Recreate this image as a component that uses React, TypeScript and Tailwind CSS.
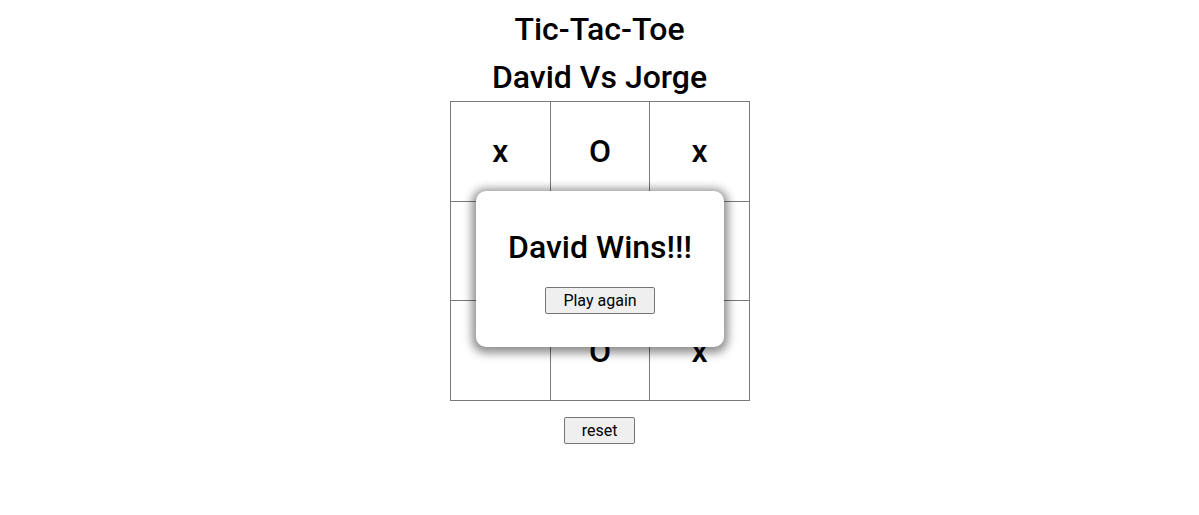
import React from "react";

// middle row is hidden behind the winner popup
const board = ["x", "O", "x", "", "", "", "", "O", "x"];

const App = () => {
  return (
    <div className="bg-white h-[515px] w-full font-['Roboto',sans-serif] text-black">
      <div className="flex flex-col items-center">
        <h1 className="mt-[5px] text-[32px] leading-[48px] font-medium">Tic-Tac-Toe</h1>
        <h2 className="text-[32px] leading-[48px] font-medium">David Vs Jorge</h2>

        <div className="relative ml-px">
          <div className="grid grid-cols-3 grid-rows-3 w-[300px] h-[300px] border-l border-t border-[#7a7a7a]">
            {board.map((c, i) => (
              <div
                key={i}
                className="flex items-center justify-center border-r border-b border-[#7a7a7a] text-[32px] font-medium"
              >
                {c}
              </div>
            ))}
          </div>

          <div className="absolute left-[26px] top-[90px] w-[248px] h-[156px] bg-white rounded-[10px] shadow-[0_2px_10px_4px_rgba(0,0,0,0.45)] flex flex-col items-center">
            <p className="mt-[37px] text-[32px] leading-[38px] font-medium">David Wins!!!</p>
            <button className="mt-[21px] h-[27px] px-[17px] bg-[#efefef] border border-[#767676] rounded-[2px] text-[16px] leading-none">
              Play again
            </button>
          </div>
        </div>

        <button className="mt-[16px] h-[27px] w-[71px] bg-[#efefef] border border-[#767676] rounded-[2px] text-[16px] leading-none">
          reset
        </button>
      </div>
    </div>
  );
};

export default App;
